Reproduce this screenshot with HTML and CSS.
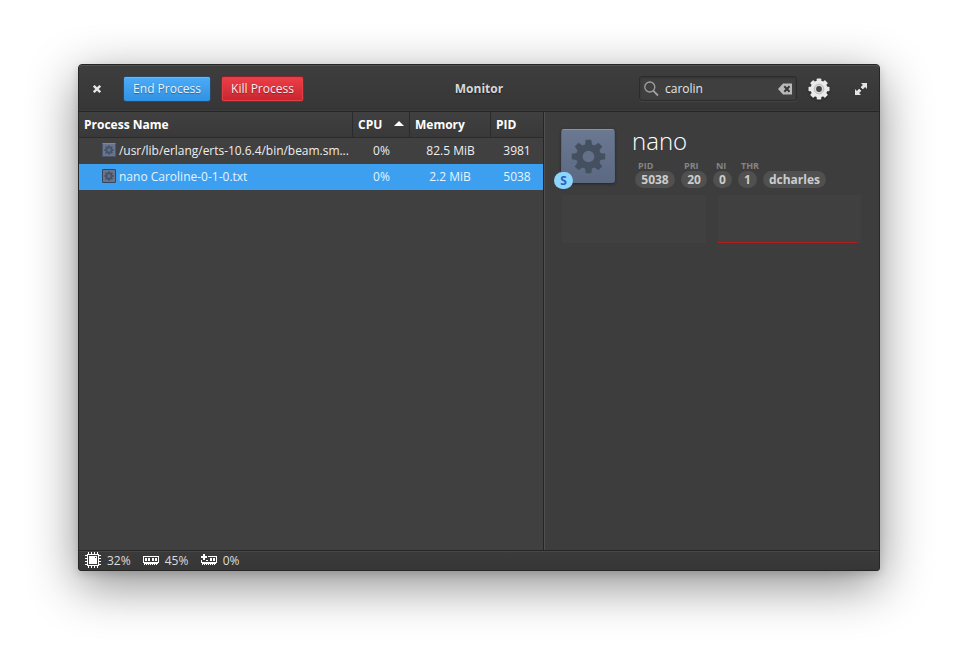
FILE: index.html
```
<!DOCTYPE html>
<html lang="en">
<head>
<meta charset="utf-8">
<title>Monitor</title>
<link rel="stylesheet" href="styles.css">
</head>
<body>
<svg class="defs" width="0" height="0">
  <defs>
    <symbol id="gear" viewBox="-18 -18 36 36">
      <g id="teeth">
        <path id="bar" d="M-3.6-12 -2.8-17.2H2.8L3.6-12V12L2.8 17.2H-2.8L-3.6 12Z"/>
        <use href="#bar" transform="rotate(45)"/>
        <use href="#bar" transform="rotate(90)"/>
        <use href="#bar" transform="rotate(135)"/>
      </g>
      <circle r="12.8"/>
      <circle class="hole" r="6"/>
    </symbol>
  </defs>
</svg>
<div class="window">
  <header class="titlebar">
    <button class="close" aria-label="Close"><svg width="8" height="8" viewBox="0 0 8 8"><path d="M.8.8 7.200 7.200M7.200.8.8 7.200" stroke="#e8e8e8" stroke-width="2.300"/></svg></button>
    <button class="btn end">End Process</button>
    <button class="btn kill">Kill Process</button>
    <h1 class="title">Monitor</h1>
    <div class="search">
      <svg width="16" height="16" viewBox="0 0 16 16" fill="none" stroke="#a0a0a0"><circle cx="5.800" cy="6" r="5" stroke-width="1.300"/><path d="M9.400 9.800 14 14.500" stroke-width="1.800"/></svg>
      <span class="query">carolin</span>
      <svg width="14" height="12" viewBox="0 0 14 12"><path d="M0 6 5 .5H14V11.500H5Z" fill="#b9b9b9"/><path d="M6.300 3.300 11.500 8.700M11.500 3.300 6.300 8.700" stroke="#383838" stroke-width="2"/></svg>
    </div>
    <svg class="settings" width="22" height="24" viewBox="-11 -11 22 24">
      <g fill="#e9e9e9">
        <g id="cog"><rect x="-2.300" y="-10.500" width="4.600" height="21" rx=".8"/><rect x="-10.500" y="-2.300" width="21" height="4.600" rx=".8"/></g>
        <use href="#cog" transform="rotate(45)"/>
        <circle r="8.500"/>
      </g>
      <circle r="4.800" fill="#dadada" stroke="#bdbdbd" stroke-width="1"/>
      <circle r="2.900" fill="#444"/>
    </svg>
    <svg class="expand" width="12" height="12" viewBox="0 0 12 12" fill="#e4e4e4"><path d="M6 0H12V6L10.100 4.100 7.700 6.500 5.500 4.300 7.900 1.900ZM0 6 1.900 7.900 4.300 5.500 6.500 7.700 4.100 10.100 6 12H0Z"/><path d="M4.300 4.300 7.700 7.700" stroke="#3a3a3a" stroke-width="1.800"/></svg>
  </header>
  <main class="content">
    <section class="processes">
      <div class="row head">
        <span>Process Name</span>
        <span class="sorted">CPU<i class="arrow"></i></span>
        <span>Memory</span>
        <span>PID</span>
      </div>
      <div class="row">
        <span class="name"><svg class="tile" width="14" height="14"><use href="#gear" x="2" y="2" width="10" height="10"/></svg><span class="command">/usr/lib/erlang/erts-10.6.4/bin/beam.sm...</span></span>
        <span class="cpu">0%</span>
        <span class="mem">82.5 MiB</span>
        <span class="pid">3981</span>
      </div>
      <div class="row selected">
        <span class="name"><svg class="tile" width="14" height="14"><use href="#gear" x="2" y="2" width="10" height="10"/></svg><span>nano Caroline-0-1-0.txt</span></span>
        <span class="cpu">0%</span>
        <span class="mem">2.2 MiB</span>
        <span class="pid">5038</span>
      </div>
    </section>
    <aside class="details">
      <div class="summary">
        <div class="app-icon">
          <svg width="35" height="35"><use href="#gear" width="35" height="35"/></svg>
          <span class="state">S</span>
        </div>
        <div class="info">
          <h2>nano</h2>
          <div class="stats">
            <div><small>PID</small><b>5038</b></div>
            <div><small>PRI</small><b>20</b></div>
            <div><small>NI</small><b>0</b></div>
            <div><small>THR</small><b>1</b></div>
            <div><small></small><b class="user">dcharles</b></div>
          </div>
        </div>
      </div>
      <div class="charts">
        <div class="chart"></div>
        <div class="chart ram"></div>
      </div>
    </aside>
  </main>
  <footer class="statusbar">
    <svg width="16" height="16" viewBox="0 0 16 16" shape-rendering="crispEdges">
      <path d="M3.500 0V16M6.500 0V16M9.500 0V16M12.500 0V16M0 3.500H16M0 6.500H16M0 9.500H16M0 12.500H16" stroke="#fff"/>
      <path d="M2 2H14V14H2Z" fill="#fff"/><path d="M3.500 3.500H12.500V12.500H3.500Z" fill="none" stroke="#3a3a3a"/><path d="M10 5h1v1h-1z" fill="#3a3a3a"/>
    </svg>
    <span>32%</span>
    <svg width="16" height="16" viewBox="0 0 16 16" shape-rendering="crispEdges">
      <path d="M0 4H16V11H0Z" fill="#fff"/><path d="M1 5H15V10H1Z" fill="#3a3a3a"/>
      <path d="M2 6h2v3h-2zM5 6h2v3h-2zM9 6h2v3h-2zM12 6h2v3h-2zM1 11h14v1h-14zM1 12h1v1h-1zM3 12h1v1h-1zM5 12h1v1h-1zM7 12h1v1h-1zM9 12h1v1h-1zM11 12h1v1h-1zM13 12h1v1h-1z" fill="#fff"/>
    </svg>
    <span>45%</span>
    <svg width="16" height="16" viewBox="0 0 16 16" shape-rendering="crispEdges">
      <path d="M7 4H16V11H0V8H1V10H15V5H7Z" fill="#fff"/>
      <path d="M5 8h2v1h-2zM9 6h2v3h-2zM12 6h2v3h-2zM1 11h14v1h-14zM1 12h1v1h-1zM3 12h1v1h-1zM5 12h1v1h-1zM7 12h1v1h-1zM9 12h1v1h-1zM11 12h1v1h-1zM13 12h1v1h-1z" fill="#fff"/>
      <path d="M2 2h2v2h2v2h-2v2h-2v-2h-2v-2h2z" fill="#fff"/>
    </svg>
    <span>0%</span>
  </footer>
</div>
</body>
</html>
```
FILE: styles.css
```
* { box-sizing: border-box; }
body {
  margin: 0;
  height: 663px;
  padding: 64px 0 0 78px;
  overflow: hidden;
  background: #fff;
  color: #eee;
  font: 12px/18px "Open Sans", "Noto Sans", sans-serif;
}
svg { display: block; flex: none; }
.defs { position: absolute; }
button { border: 0; padding: 0; background: none; font: inherit; color: inherit; }
h1, h2 { margin: 0; font-size: inherit; }

.window {
  width: 802px;
  height: 507px;
  display: flex;
  flex-direction: column;
  border: 1px solid #262626;
  border-radius: 4px 4px 3px 3px;
  background: #3d3d3d;
  box-shadow: 0 14px 50px rgba(0, 0, 0, .46), 0 3px 8px rgba(0, 0, 0, .14);
}

.titlebar {
  flex: none;
  height: 47px;
  display: flex;
  align-items: center;
  padding-top: 1px;
  border-bottom: 1px solid #262626;
  border-radius: 3px 3px 0 0;
  background: linear-gradient(#3e3e3e, #363636);
  box-shadow: inset 0 1px #505050, inset 0 -1px #3c3c3c;
}
.close { margin: 1px 26px 0 14px; width: 8px; }
.btn {
  height: 24px;
  border-radius: 2px;
  line-height: 22px;
  padding-top: 1px;
  text-shadow: 0 1px 1px rgba(0, 0, 0, .35);
}
.end {
  margin-left: -3px;
  width: 86px;
  color: #e6f4ff;
  background: linear-gradient(#4cacf8, #3191e2);
  box-shadow: inset 0 1px #68b9fa, 0 0 0 1px #2f485f;
}
.kill {
  margin-left: 12px;
  width: 81px;
  color: #ffe9e9;
  background: linear-gradient(#ec3f49, #c9252f);
  box-shadow: inset 0 0 0 1px #e23e48, 0 0 0 1px #8d2229;
}
.title {
  width: 100px;
  margin-left: 126px;
  color: #d8d8d8;
  text-align: center;
  text-shadow: 0 1px 1px #222;
}
.search {
  margin-left: 110px;
  width: 158px;
  height: 25px;
  display: flex;
  align-items: center;
  padding: 0 4px 0 4px;
  border: 1px solid #2c2c2c;
  border-radius: 3px;
  background: #3f3f3f;
  box-shadow: inset 0 1px 2px #333, 0 1px #444;
}
.query { flex: 1; margin: 1px 0 0 5px; color: #e6e6e6; }
.settings { margin: 3px 0 0 11px; filter: drop-shadow(0 1px 1px #222); }
.expand { margin: 1px 0 0 25px; }

.content { flex: 1; min-height: 0; display: flex; }
.processes { width: 465px; flex: none; border-right: 1px solid #252525; background: #404040; }
.row { display: grid; grid-template-columns: 274px 57px 81px 52px; height: 26px; line-height: 25px; }
.head {
  font-weight: 700;
  color: #fff;
  border-bottom: 1px solid #2b2b2b;
  background: linear-gradient(#404040, #393939);
}
.head span { padding-left: 5px; border-right: 1px solid #2b2b2b; }
.head span:last-child { border: 0; }
.sorted { display: flex; align-items: center; }
.arrow { margin: 0 0 2px 12px; border: solid transparent; border-width: 0 5px 5px; border-bottom-color: #fff; }
.name { display: flex; padding-left: 23px; white-space: nowrap; }
.command { letter-spacing: -.035px; }
.tile {
  margin: 5px 3px 0 0;
  border: 1px solid #4a566b;
  border-top-color: #7b879d;
  border-radius: 1px;
  background: #68758e;
  fill: #46536a;
}
.tile use { transform: translate(-1px, -1px); }
.selected .tile { border-color: #34455c; }
.cpu, .mem, .pid { text-align: center; }
.selected .mem { padding-right: 1px; }
.selected { background: #3d9ff0; color: #e5f4ff; }

.details { flex: 1; border-left: 1px solid #505050; padding: 16px 17px 0 16px; }
.summary { display: flex; height: 67px; }
.app-icon {
  position: relative;
  width: 54px;
  height: 54px;
  flex: none;
  display: grid;
  place-items: center;
  margin-top: 1px;
  border: 1px solid #5a6881;
  border-top-color: #8994a8;
  border-radius: 3px;
  background: linear-gradient(#6b7892, #5b6982);
  box-shadow: 0 1px 3px #252525;
  fill: #44505f;
}
.hole { fill: #637089; }
.state {
  position: absolute;
  left: -8px;
  top: 42px;
  width: 19px;
  height: 17px;
  border-radius: 9px;
  background: #8cd5ff;
  color: #2a5fb8;
  font-weight: 700;
  line-height: 18px;
  text-align: center;
}
.info { margin: -1px 0 0 17px; }
h2 { font-size: 24px; line-height: 28px; font-weight: 300; color: #fff; }
.stats { display: flex; gap: 6px; margin: 5px 0 0 3px; }
.stats small { display: block; height: 11px; padding-left: 3px; font-size: 9px; line-height: 11px; font-weight: 700; color: #858585; }
.stats b { display: block; height: 17px; border-radius: 9px; line-height: 17px; text-align: center; background: #505050; color: #ccc; }
.stats div:nth-child(1) { width: 40px; }
.stats div:nth-child(2) { width: 26px; }
.stats div:nth-child(3), .stats div:nth-child(4) { width: 19px; }
.stats .user { width: 63px; }
.charts { display: flex; gap: 12px; padding-left: 1px; }
.chart { width: 144px; height: 48px; background: #404040; }
.ram { width: 143px; background: linear-gradient(#b51c22, #b51c22) 0 100% / 139px 1px no-repeat #404040; }

.statusbar {
  flex: none;
  height: 20px;
  display: flex;
  align-items: center;
  padding-left: 6px;
  border-top: 1px solid #262626;
  border-radius: 0 0 2px 2px;
  background: linear-gradient(#3b3b3b, #363636);
  box-shadow: inset 0 1px #474747;
}
.statusbar svg { margin-bottom: 1px; }
.statusbar span { margin: 0 12px 0 6px; color: #ddd; }
.statusbar span + svg + span { margin-right: 12.400px; }
```
